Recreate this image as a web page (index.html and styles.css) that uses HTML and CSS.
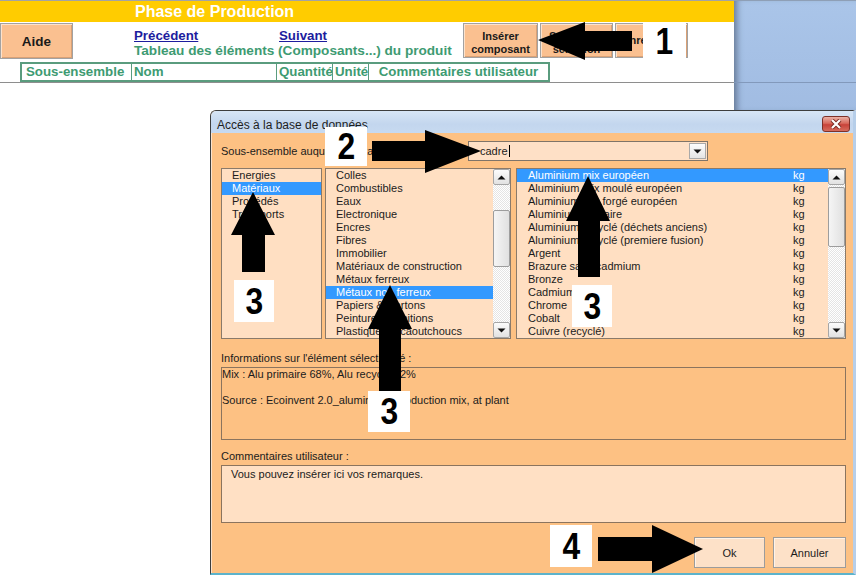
FILE: index.html
```html
<!DOCTYPE html>
<html lang="fr">
<head>
<meta charset="utf-8">
<title>Phase de Production</title>
<link rel="stylesheet" href="styles.css">
</head>
<body>
<div class="screen">
  <div class="topbar">
    <div class="sheet">
      <div class="band"><span class="band-title">Phase de Production</span></div>
      <div class="toolbar">
        <button class="xl-btn aide">Aide</button>
        <div class="nav">
          <div class="links"><a class="link prev" href="#">Précédent</a><a class="link" href="#">Suivant</a></div>
          <div class="caption">Tableau des éléments (Composants...) du produit</div>
        </div>
        <div class="actions">
          <button class="xl-btn act act-insert">Insérer<br>composant</button>
          <button class="xl-btn act act-del">Supprimer<br>sélection</button>
          <button class="xl-btn act act-save">Enregistrer</button>
        </div>
      </div>
      <div class="grid-head">
        <div class="gh c1">Sous-ensemble</div>
        <div class="gh c2">Nom</div>
        <div class="gh c3">Quantité</div>
        <div class="gh c4">Unité</div>
        <div class="gh c5">Commentaires utilisateur</div>
      </div>
      <div class="sheet-rule"></div>
    </div>
    <div class="desk"><div class="desk-rule"></div></div>
  </div>

  <div class="dialog">
    <div class="titlebar">
      <span class="title">Accès à la base de données</span>
      <span class="close">
        <svg width="14" height="10" viewBox="0 0 14 10"><path d="M3 1 L11 9 M11 1 L3 9" stroke="#7a2a22" stroke-width="4"/><path d="M3 1 L11 9 M11 1 L3 9" stroke="#ffffff" stroke-width="2.2"/></svg>
      </span>
    </div>
    <div class="dlg-body">
      <div class="row-sub">
        <span class="lbl lbl-sub">Sous-ensemble auquel se rattache le composant :</span>
        <div class="combo">
          <span class="combo-text">cadre<span class="caret"></span></span>
          <span class="combo-btn"><svg width="9" height="5" viewBox="0 0 9 5"><polygon points="0.5,0.5 8.5,0.5 4.5,4.5" fill="#111"/></svg></span>
        </div>
      </div>

      <div class="lists">
        <div class="lb lb-cat">
          <ul class="items">
            <li>Energies</li>
            <li class="sel">Matériaux</li>
            <li>Procédés</li>
            <li>Transports</li>
          </ul>
        </div>
        <div class="lb lb-sub">
          <ul class="items">
            <li>Colles</li>
            <li>Combustibles</li>
            <li>Eaux</li>
            <li>Electronique</li>
            <li>Encres</li>
            <li>Fibres</li>
            <li>Immobilier</li>
            <li>Matériaux de construction</li>
            <li>Métaux ferreux</li>
            <li class="sel">Métaux non ferreux</li>
            <li>Papiers &amp; Cartons</li>
            <li>Peintures &amp; finitions</li>
            <li>Plastiques &amp; caoutchoucs</li>
          </ul>
          <div class="vs">
            <span class="vs-btn"><svg width="9" height="5" viewBox="0 0 9 5"><polygon points="0.5,4.5 8.5,4.5 4.5,0.5" fill="#111"/></svg></span>
            <span class="vs-track"><span class="thumb"></span></span>
            <span class="vs-btn"><svg width="9" height="5" viewBox="0 0 9 5"><polygon points="0.5,0.5 8.5,0.5 4.5,4.5" fill="#111"/></svg></span>
          </div>
        </div>
        <div class="lb lb-item">
          <ul class="items">
            <li class="sel"><span class="nm">Aluminium mix européen</span><span class="un">kg</span></li>
            <li><span class="nm">Aluminium mix moulé européen</span><span class="un">kg</span></li>
            <li><span class="nm">Aluminium mix forgé européen</span><span class="un">kg</span></li>
            <li><span class="nm">Aluminium primaire</span><span class="un">kg</span></li>
            <li><span class="nm">Aluminium recyclé (déchets anciens)</span><span class="un">kg</span></li>
            <li><span class="nm">Aluminium recyclé (premiere fusion)</span><span class="un">kg</span></li>
            <li><span class="nm">Argent</span><span class="un">kg</span></li>
            <li><span class="nm">Brazure sans cadmium</span><span class="un">kg</span></li>
            <li><span class="nm">Bronze</span><span class="un">kg</span></li>
            <li><span class="nm">Cadmium</span><span class="un">kg</span></li>
            <li><span class="nm">Chrome</span><span class="un">kg</span></li>
            <li><span class="nm">Cobalt</span><span class="un">kg</span></li>
            <li><span class="nm">Cuivre (recyclé)</span><span class="un">kg</span></li>
          </ul>
          <div class="vs">
            <span class="vs-btn"><svg width="9" height="5" viewBox="0 0 9 5"><polygon points="0.5,4.5 8.5,4.5 4.5,0.5" fill="#111"/></svg></span>
            <span class="vs-track"><span class="thumb"></span></span>
            <span class="vs-btn"><svg width="9" height="5" viewBox="0 0 9 5"><polygon points="0.5,0.5 8.5,0.5 4.5,4.5" fill="#111"/></svg></span>
          </div>
        </div>
      </div>

      <div class="lbl info-lbl">Informations sur l'élément sélectionné :</div>
      <div class="infobox">Mix : Alu primaire 68%, Alu recyclé 32%<br><br>Source : Ecoinvent 2.0_aluminium, production mix, at plant</div>

      <div class="lbl com-lbl">Commentaires utilisateur :</div>
      <div class="combox">Vous pouvez insérer ici vos remarques.</div>

      <div class="dlg-actions">
        <button class="dlg-btn ok">Ok</button>
        <button class="dlg-btn cancel">Annuler</button>
      </div>
    </div>
  </div>

  <svg class="arrows" width="856" height="575" viewBox="0 0 856 575">
    <polygon points="538,40 585,22 585,31 632,31 632,51 585,51 585,60" fill="#000"/>
    <polygon points="372,141 425,141 425,130 481,151 425,173 425,161 372,161" fill="#000"/>
    <polygon points="253,192 275,235 265,235 265,272 242,272 242,235 231,235" fill="#000"/>
    <polygon points="390,285 412,329 401,329 401,392 379,392 379,329 368,329" fill="#000"/>
    <polygon points="588,176 610,221 600,221 600,277 578,277 578,221 566,221" fill="#000"/>
    <polygon points="598,537 652,537 652,525 703,549 652,573 652,561 598,561" fill="#000"/>
  </svg>
  <div class="badge b1"><span class="num">1</span></div>
  <div class="badge b2"><span class="num">2</span></div>
  <div class="badge b3a"><span class="num">3</span></div>
  <div class="badge b3b"><span class="num">3</span></div>
  <div class="badge b3c"><span class="num">3</span></div>
  <div class="badge b4"><span class="num">4</span></div>
</div>
</body>
</html>
```

FILE: styles.css
```css
* { box-sizing: border-box; }
html, body { margin: 0; padding: 0; }
body {
  width: 856px;
  height: 575px;
  overflow: hidden;
  background: #ffffff;
  font-family: "Liberation Sans", Arial, sans-serif;
}
.screen { position: relative; width: 856px; height: 575px; overflow: hidden; background: #fff; }

/* ---------- worksheet ---------- */
.topbar { display: flex; height: 110px; }
.sheet { width: 734px; border-top: 1px solid #a3a3a3; background: #fff; }
.band { height: 21px; background: #ffcc00; padding-left: 135px; }
.band-title { color: #ffffff; font-weight: bold; font-size: 16px; line-height: 22px; white-space: nowrap; }

.toolbar { display: flex; height: 40px; }
.xl-btn {
  font-family: "Liberation Sans", Arial, sans-serif;
  font-weight: bold;
  color: #1a1a1a;
  background: #fac090;
  border: 1px solid #a2a2a2;
  box-shadow: inset 1px 1px 0 #fde2cb, inset -1px -1px 0 #d9a176;
  padding: 0;
  margin: 0;
}
.aide { width: 73px; height: 36px; margin-top: 1px; font-size: 13.5px; }
.nav { width: 329px; margin-left: 61px; padding-top: 6px; }
.links { display: flex; height: 15px; line-height: 15px; }
.link { color: #1d1d9e; font-weight: bold; font-size: 13.3px; text-decoration: underline; }
.link.prev { width: 145px; }
.caption { color: #3e9b72; font-weight: bold; font-size: 13.6px; line-height: 14px; margin-top: 1px; white-space: nowrap; }
.actions { display: flex; gap: 2px; margin-top: 1px; height: 35px; }
.act { height: 35px; font-size: 11px; line-height: 13px; padding-top: 5px; }
.act-insert { width: 75px; }
.act-del { width: 73px; }
.act-save { width: 73px; padding-top: 0; }

.grid-head {
  display: grid;
  grid-template-columns: 109px 145px 56px 36px 1fr;
  width: 530px;
  height: 20px;
  margin-left: 20px;
  border: 2px solid #5a9c7e;
}
.gh {
  color: #3e9b72;
  font-weight: bold;
  font-size: 13.3px;
  line-height: 16px;
  white-space: nowrap;
  padding-left: 2px;
}
.gh + .gh { border-left: 1px solid #5a9c7e; }
.gh.c1 { padding-left: 4px; }
.gh.c5 { text-align: center; padding-left: 0; }
.sheet-rule { height: 1px; background: #8e8e8e; }

.desk {
  flex: 1;
  height: 110px;
  background: linear-gradient(#aac5e9, #a1bce2);
  border-top: 1px solid #8e9fb6;
  box-shadow: inset 7px 0 6px -4px rgba(40, 52, 72, 0.5);
}
.desk-rule { height: 82px; border-bottom: 1px solid #8299bb; }

/* ---------- dialog ---------- */
.dialog {
  position: absolute;
  left: 210px;
  top: 110px;
  width: 646px;
  height: 465px;
  display: flex;
  flex-direction: column;
  background: #fdc183;
  border: 1px solid #3d3d3d;
  border-right: 3px solid #b6cee9;
  border-bottom: 2px solid #5cb3cb;
  border-radius: 6px 0 0 0;
  overflow: hidden;
  font-family: "Liberation Sans", Arial, sans-serif;
  font-size: 11px;
  color: #1b1b1b;
}
.titlebar {
  height: 22px;
  flex: 0 0 22px;
  display: flex;
  align-items: flex-start;
  padding-left: 6px;
  background: linear-gradient(#d7e5f5, #c3d6ee 60%, #c7daf0);
}
.title { font-size: 12px; line-height: 12px; margin-top: 8px; color: #1e1e1e; white-space: nowrap; }
.close {
  margin-left: auto;
  margin-right: 3px;
  margin-top: 5px;
  width: 28px;
  height: 16px;
  display: flex;
  align-items: center;
  justify-content: center;
  border: 1px solid #7d3129;
  border-radius: 3px;
  background: linear-gradient(#eab1a6, #d8695c 45%, #c8433a 55%, #d66c5c);
}

.dlg-body {
  flex: 1;
  padding: 8px 7px 0 10px;
  box-shadow: inset 1px 0 0 #fbe3cd;
}
.lbl { line-height: 13px; height: 13px; white-space: nowrap; }

.row-sub { display: flex; align-items: center; height: 20px; }
.lbl-sub { width: 247px; flex: 0 0 247px; }
.combo {
  width: 240px;
  height: 20px;
  display: flex;
  border: 1px solid #7f7468;
  background: #fee0c6;
}
.combo-text { flex: 1; padding-left: 11px; line-height: 18px; }
.caret { display: inline-block; width: 1px; height: 12px; background: #000; margin-left: 1px; vertical-align: -2px; }
.combo-btn {
  width: 17px;
  height: 16px;
  margin: 1px 1px 1px 0;
  display: flex;
  align-items: center;
  justify-content: center;
  border: 1px solid #a9a9a9;
  background: linear-gradient(#fdfdfd, #e4e4e4);
}

.lists { display: flex; margin-top: 7px; height: 171px; }
.lb {
  height: 171px;
  display: flex;
  border: 1px solid #8a7a6a;
  background: #ffdfc2;
}
.lb-cat { width: 101px; }
.lb-sub { width: 186px; margin-left: 3px; }
.lb-item { width: 330px; margin-left: 5px; }
.items { flex: 1; list-style: none; margin: 0; padding: 0; overflow: hidden; }
.items li { height: 13px; line-height: 13px; padding-left: 10px; white-space: nowrap; }
.lb-item .items li { display: flex; padding-left: 11px; }
.nm { flex: 1; }
.un { width: 35px; }
.items li.sel { background: #3399ff; color: #ffffff; }

.vs {
  width: 17px;
  display: flex;
  flex-direction: column;
  background: repeating-conic-gradient(#ffffff 0 25%, #e4e4e4 0 50%) 0 0 / 2px 2px;
}
.vs-btn {
  height: 16px;
  flex: 0 0 16px;
  display: flex;
  align-items: center;
  justify-content: center;
  border: 1px solid #a6a6a6;
  border-radius: 2px;
  background: linear-gradient(#fcfcfc, #e2e2e2);
}
.vs-track { flex: 1; display: flex; flex-direction: column; }
.thumb {
  display: block;
  border: 1px solid #9d9d9d;
  border-radius: 2px;
  background: linear-gradient(90deg, #f5f5f5, #e0e0e0);
}
.lb-sub .thumb { margin-top: 25px; height: 57px; }
.lb-item .thumb { margin-top: 2px; height: 60px; }

.info-lbl { margin-top: 13px; }
.infobox {
  margin-top: 2px;
  height: 73px;
  border: 1px solid #8b745e;
  line-height: 13px;
  white-space: nowrap;
}
.com-lbl { margin-top: 10px; }
.combox {
  margin-top: 2px;
  height: 58px;
  border: 1px solid #8b745e;
  background: #ffe0c4;
  padding: 2px 9px;
  line-height: 13px;
}
.dlg-actions { display: flex; justify-content: flex-end; gap: 8px; margin-top: 14px; }
.dlg-btn {
  height: 31px;
  font-family: "Liberation Sans", Arial, sans-serif;
  font-size: 11px;
  color: #1b1b1b;
  background: #fde1c8;
  border: 1px solid #9c9c9c;
  box-shadow: inset 1px 1px 0 #fff3e8;
  padding: 0;
}
.dlg-btn.ok { width: 71px; }
.dlg-btn.cancel { width: 73px; }

/* ---------- annotations ---------- */
.arrows { position: absolute; left: 0; top: 0; }
.badge {
  position: absolute;
  background: #ffffff;
  display: flex;
  align-items: center;
  justify-content: center;
  font-family: "Liberation Sans", Arial, sans-serif;
  font-weight: bold;
  font-size: 37px;
  color: #000;
}
.num { display: inline-block; transform: scaleX(0.86); line-height: 1; }
.b1 { left: 643px; top: 22px; width: 43px; height: 38px; }
.b2 { left: 325px; top: 127px; width: 42px; height: 39px; }
.b3a { left: 234px; top: 280px; width: 40px; height: 42px; }
.b3b { left: 368px; top: 391px; width: 42px; height: 41px; }
.b3c { left: 572px; top: 285px; width: 40px; height: 42px; }
.b4 { left: 550px; top: 525px; width: 42px; height: 42px; }
```
